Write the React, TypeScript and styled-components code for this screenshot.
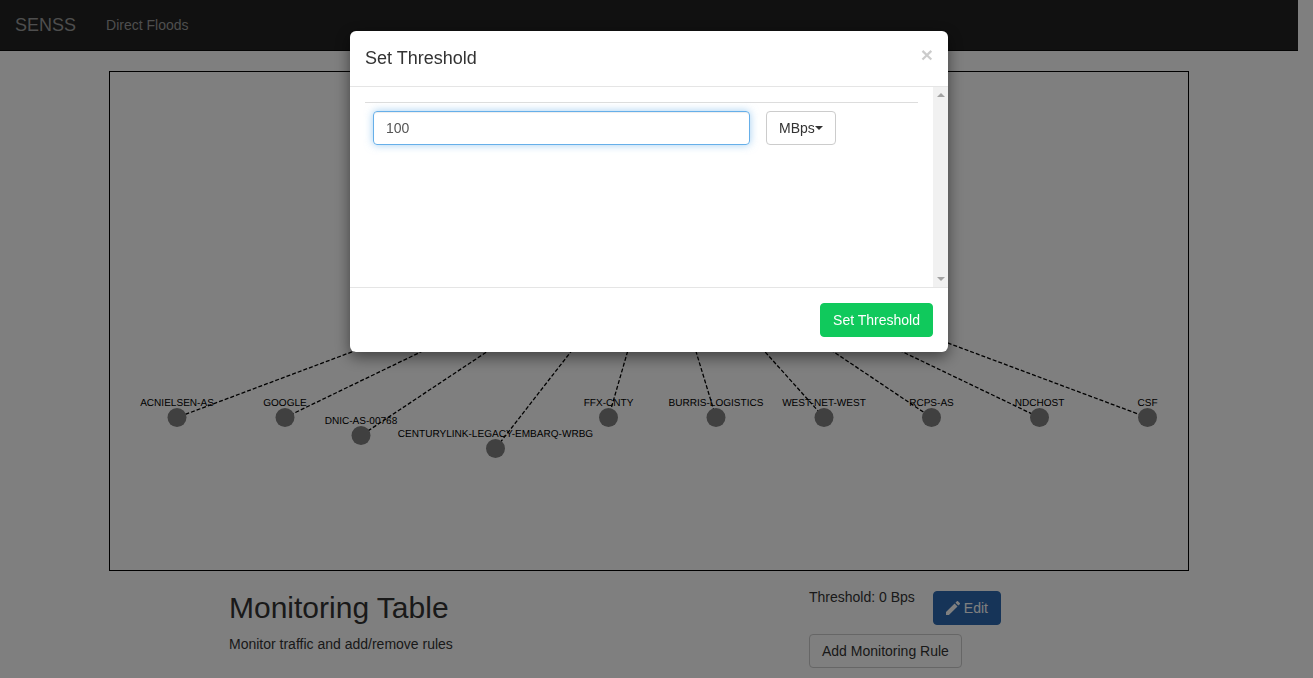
import styled, { createGlobalStyle } from 'styled-components';

type Peer = {
  name: string;
  x: number;
  y: number;
};

// the hub node is hidden behind the modal, only its edges show
const HUB = { x: 551, y: 164 };

const peers: Peer[] = [
  { name: 'ACNIELSEN-AS', x: 67, y: 345.5 },
  { name: 'GOOGLE', x: 175, y: 345.5 },
  { name: 'DNIC-AS-00768', x: 251, y: 363.5 },
  { name: 'CENTURYLINK-LEGACY-EMBARQ-WRBG', x: 385.5, y: 376.5 },
  { name: 'FFX-CNTY', x: 498.5, y: 345.5 },
  { name: 'BURRIS-LOGISTICS', x: 606, y: 345.5 },
  { name: 'WEST-NET-WEST', x: 714, y: 345.5 },
  { name: 'RCPS-AS', x: 821.5, y: 345.5 },
  { name: 'NDCHOST', x: 929.5, y: 345.5 },
  { name: 'CSF', x: 1037.5, y: 345.5 },
];

const GlobalStyle = createGlobalStyle`
  html,
  body {
    margin: 0;
    height: 678px;
    overflow: hidden;
    background: #fff;
  }

  body {
    font-family: 'Liberation Sans', Arial, sans-serif;
    font-size: 14px;
    line-height: 20px;
    color: #333;
  }
`;

const Page = styled.div`
  width: 1298px;
  height: 678px;
  overflow: hidden;
`;

const Navbar = styled.nav`
  height: 50px;
  background: #222;
  border-bottom: 1px solid #080808;
  display: flex;
  align-items: center;
  padding-left: 15px;
  gap: 30px;
`;

const Brand = styled.a`
  font-size: 18px;
  line-height: 20px;
  color: #9d9d9d;
`;

const NavLink = styled.a`
  font-size: 14px;
  line-height: 20px;
  color: #9d9d9d;
`;

const GraphFrame = styled.div`
  width: 1078px;
  height: 498px;
  margin: 20px 0 0 109px;
  border: 1px solid #000;
`;

const GraphSvg = styled.svg`
  display: block;
  width: 1078px;
  height: 498px;
`;

const PeerLabel = styled.text`
  font-family: 'Liberation Sans', Arial, sans-serif;
  font-size: 10.05px;
  fill: #000;
  text-anchor: middle;
  text-rendering: geometricPrecision;
`;

const Below = styled.div`
  display: flex;
  margin-left: 229px;
`;

const TitleColumn = styled.div`
  width: 580px;
`;

const Title = styled.h2`
  margin: 20px 0 10px;
  font-size: 30px;
  line-height: 33px;
  font-weight: 500;
  color: #333;
`;

const Subtitle = styled.p`
  margin: 0;
  color: #333;
`;

const ActionColumn = styled.div`
  padding-top: 16px;
`;

const ThresholdRow = styled.div`
  display: flex;
  align-items: flex-start;
  gap: 18px;
`;

const ThresholdText = styled.span`
  color: #333;
`;

const Button = styled.button<{ $tone?: 'default' | 'primary' | 'success' }>`
  display: inline-flex;
  align-items: center;
  height: 34px;
  padding: 6px 12px;
  font-family: inherit;
  font-size: 14px;
  line-height: 20px;
  border-radius: 4px;
  border: 1px solid
    ${p =>
      p.$tone === 'primary' ? '#2c69b0' : p.$tone === 'success' ? '#10c95c' : '#ccc'};
  color: ${p => (p.$tone === 'primary' || p.$tone === 'success' ? '#fff' : '#333')};
  background: ${p =>
    p.$tone === 'primary' ? '#2c69b0' : p.$tone === 'success' ? '#10c95c' : '#fff'};
`;

const EditButton = styled(Button)`
  margin-top: 4px;
`;

const AddRuleButton = styled(Button)`
  margin-top: 9px;
`;

const PencilIcon = styled.svg`
  width: 14px;
  height: 14px;
  margin-right: 4px;
  fill: currentColor;
`;

const Backdrop = styled.div`
  position: fixed;
  inset: 0;
  background: rgba(0, 0, 0, 0.5);
`;

const Modal = styled.div`
  position: fixed;
  top: 31px;
  left: 350px;
  width: 598px;
  height: 321px;
  display: flex;
  flex-direction: column;
  background: #fff;
  border-radius: 6px;
  box-shadow: 0 5px 15px rgba(0, 0, 0, 0.5);
  overflow: hidden;
`;

const ModalHeader = styled.div`
  height: 56px;
  flex: none;
  display: flex;
  justify-content: space-between;
  padding: 15px;
  box-sizing: border-box;
  border-bottom: 1px solid #e5e5e5;
`;

const ModalTitle = styled.h4`
  margin: 0;
  font-size: 18px;
  line-height: 24px;
  font-weight: 500;
  color: #333;
`;

const CloseMark = styled.span`
  margin: -2px 0 0;
  font-size: 21px;
  line-height: 21px;
  font-weight: 700;
  color: #000;
  opacity: 0.2;
`;

const ModalBody = styled.div`
  height: 201px;
  flex: none;
  display: flex;
  box-sizing: border-box;
  border-bottom: 1px solid #e5e5e5;
`;

const BodyContent = styled.div`
  flex: 1;
  padding: 15px 15px 0;
`;

const Rule = styled.hr`
  margin: 0 0 8px;
  border: 0;
  border-top: 1px solid #ddd;
`;

const FormRow = styled.div`
  display: flex;
  gap: 16px;
  padding-left: 8px;
`;

const ThresholdInput = styled.div`
  width: 377px;
  height: 34px;
  box-sizing: border-box;
  padding: 6px 12px;
  font-size: 14px;
  line-height: 20px;
  color: #555;
  border: 1px solid #66afe9;
  border-radius: 4px;
  box-shadow: inset 0 1px 1px rgba(0, 0, 0, 0.075), 0 0 8px rgba(102, 175, 233, 0.6);
`;

const Caret = styled.span`
  width: 0;
  height: 0;
  border-top: 4px solid #333;
  border-left: 4px solid transparent;
  border-right: 4px solid transparent;
`;

const Scrollbar = styled.div`
  width: 15px;
  flex: none;
  background: #f1f1f1;
  display: flex;
  flex-direction: column;
  justify-content: space-between;
  align-items: center;
  padding: 6px 0 6px;
  box-sizing: border-box;
`;

const ScrollArrow = styled.span<{ $down?: boolean }>`
  width: 0;
  height: 0;
  border-left: 4px solid transparent;
  border-right: 4px solid transparent;
  ${p =>
    p.$down ? 'border-top: 4px solid #a3a3a3;' : 'border-bottom: 4px solid #a3a3a3;'}
`;

const ModalFooter = styled.div`
  flex: 1;
  display: flex;
  justify-content: flex-end;
  padding: 15px;
`;

const App = () => {
  return (
    <>
      <GlobalStyle />
      <Page>
        <Navbar>
          <Brand>SENSS</Brand>
          <NavLink>Direct Floods</NavLink>
        </Navbar>

        <GraphFrame>
          <GraphSvg viewBox='0 0 1078 498'>
            {peers.map(peer => (
              <line
                key={peer.name}
                x1={HUB.x}
                y1={HUB.y}
                x2={peer.x}
                y2={peer.y}
                stroke='#000'
                strokeWidth='1.3'
                strokeDasharray='4 2'
              />
            ))}
            {peers.map(peer => (
              <g key={peer.name}>
                <circle cx={peer.x} cy={peer.y} r='9.5' fill='#808080' />
                <PeerLabel x={peer.x} y={peer.y - 11.5}>
                  {peer.name}
                </PeerLabel>
              </g>
            ))}
          </GraphSvg>
        </GraphFrame>

        <Below>
          <TitleColumn>
            <Title>Monitoring Table</Title>
            <Subtitle>Monitor traffic and add/remove rules</Subtitle>
          </TitleColumn>
          <ActionColumn>
            <ThresholdRow>
              <ThresholdText>Threshold: 0 Bps</ThresholdText>
              <EditButton $tone='primary'>
                <PencilIcon viewBox='3 3 18 18'>
                  <path d='M3 17.25V21h3.75L17.81 9.94l-3.75-3.75L3 17.25zM20.71 7.04a1 1 0 0 0 0-1.41l-2.34-2.34a1 1 0 0 0-1.41 0l-1.83 1.83 3.75 3.75 1.83-1.83z' />
                </PencilIcon>
                Edit
              </EditButton>
            </ThresholdRow>
            <AddRuleButton>Add Monitoring Rule</AddRuleButton>
          </ActionColumn>
        </Below>
      </Page>

      <Backdrop />

      <Modal>
        <ModalHeader>
          <ModalTitle>Set Threshold</ModalTitle>
          <CloseMark>×</CloseMark>
        </ModalHeader>
        <ModalBody>
          <BodyContent>
            <Rule />
            <FormRow>
              <ThresholdInput>100</ThresholdInput>
              <Button>
                MBps
                <Caret />
              </Button>
            </FormRow>
          </BodyContent>
          <Scrollbar>
            <ScrollArrow />
            <ScrollArrow $down />
          </Scrollbar>
        </ModalBody>
        <ModalFooter>
          <Button $tone='success'>Set Threshold</Button>
        </ModalFooter>
      </Modal>
    </>
  );
};

export default App;
